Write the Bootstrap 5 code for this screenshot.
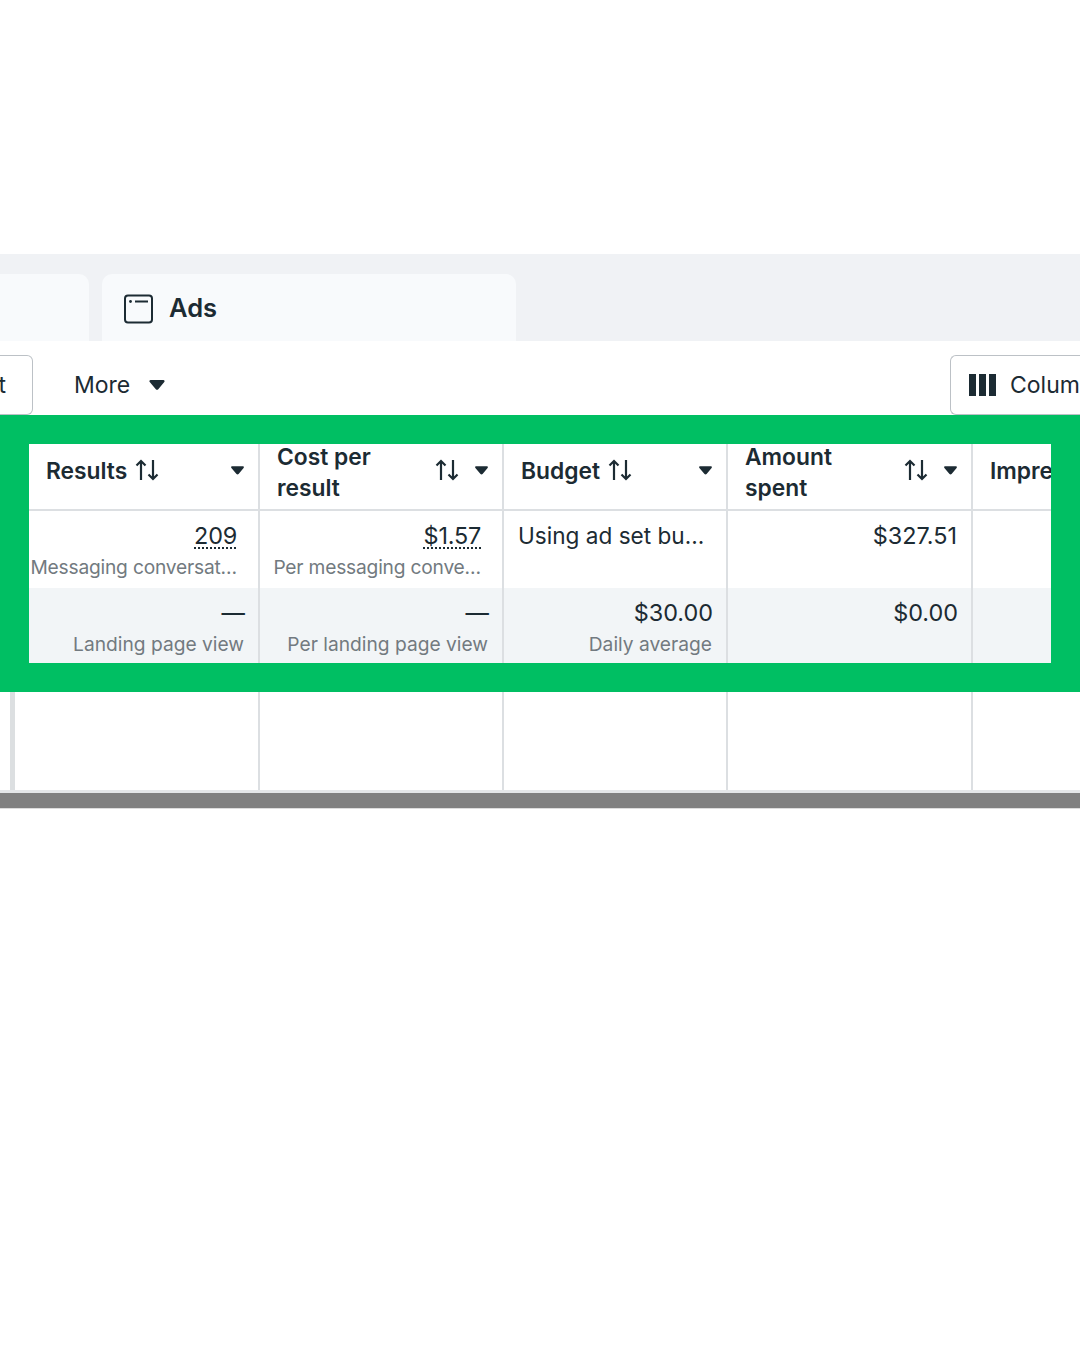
<!DOCTYPE html>
<html lang="en">
<head>
    <meta charset="UTF-8">
    <meta name="viewport" content="width=device-width, initial-scale=1.0">
    <title>Ads table</title>
    <link href="https://cdn.jsdelivr.net/npm/bootstrap@5.3.0/dist/css/bootstrap.min.css" rel="stylesheet">
    <style>
        body {
            font-family: Inter, "Noto Sans", sans-serif;
            color: #1c2b33;
            background: #fff;
            overflow: hidden;
        }
        .top-gap { height: 254px; }
        .tab-strip {
            height: 87px;
            background: #f0f2f5;
            padding-top: 20px;
            gap: 13px;
        }
        .tab-item {
            background: #f8fafc;
            border-radius: 10px 10px 0 0;
        }
        .tab-first { width: 89px; border-top-left-radius: 0; }
        .tab-ads {
            width: 414px;
            padding: 2px 0 0 21px;
            gap: 15px;
            font-size: 25.500px;
            font-weight: 600;
        }
        .tool-row { height: 74px; padding-top: 14px; }
        .tool-btn {
            height: 60px;
            background: #fff;
            border: 1.5px solid #bcc1c6;
            font-size: 23px;
        }
        .tool-left { width: 33px; border-left: 0; border-radius: 0 6px 6px 0; padding-right: 26px; justify-content: flex-end; overflow: hidden; }
        .tool-more { margin-left: 41px; gap: 19px; font-size: 23px; height: 60px; }
        .tool-cols {
            width: 130px;
            border-right: 0;
            border-radius: 6px 0 0 6px;
            padding-left: 18px;
            gap: 14px;
            overflow: hidden;
            white-space: nowrap;
        }
        .green-frame {
            background: #00bf63;
            padding: 29px;
        }
        .ads-grid {
            table-layout: fixed;
            width: 1022px;
            border-collapse: collapse;
            background: #fff;
        }
        .col-results { width: 230px; }
        .col-cost { width: 244px; }
        .col-budget { width: 224px; }
        .col-spent { width: 245px; }
        .col-impr { width: 79px; }
        .ads-grid th, .ads-grid td {
            border-right: 2px solid #dcdfe2;
            overflow: hidden;
            vertical-align: top;
            white-space: nowrap;
        }
        .ads-grid th:last-child, .ads-grid td:last-child { border-right: 0; }
        .ads-grid th {
            height: 66px;
            border-bottom: 2px solid #dcdfe2;
            font-size: 22.800px;
            font-weight: 600;
            line-height: 31px;
            padding: 0 14px 0 17px;
        }
        .head-inner { height: 52px; }
        .head-wrap { white-space: normal; margin-top: 4px; }
        .caret-gap { margin-left: 15px; }
        .body-a td { height: 78px; padding: 8px 14px 0 0; text-align: right; }
        .body-b td { height: 75px; padding: 8px 13px 0 0; text-align: right; background: #f2f5f7; }
        .big-val { font-size: 23.400px; line-height: 34px; }
        .dot-val {
            margin-right: 7px;
            text-decoration: underline dotted 2px;
            text-underline-offset: 3px;
            letter-spacing: -.2px;
        }
        .sub-val {
            font-size: 19.200px;
            line-height: 28px;
            color: #727a80;
            margin-right: 1px;
        }
        .sub-val.cut-val { margin-right: 7px; letter-spacing: -.2px; }
        .body-a td.left-val { text-align: left; padding-left: 14px; }
        .left-val .big-val { font-size: 22.600px; }
        .empty-row { height: 98px; }
        .empty-cell { border-right: 2px solid #dcdfe2; }
        .scroll-edge { width: 5px; margin-left: 10px; background: #dcdfe1; }
        .gap-a { width: 245px; }
        .gap-b { width: 244px; }
        .gap-c { width: 224px; }
        .gap-d { width: 245px; }
        .scroll-bar {
            height: 19px;
            background: #808080;
            border-top: 3px solid #e4e6e8;
            border-bottom: 1px solid #dcdcdc;
        }
    </style>
</head>
<body>
    <div class="top-gap"></div>

    <div class="tab-strip d-flex">
        <div class="tab-item tab-first"></div>
        <div class="tab-item tab-ads d-flex align-items-center">
            <svg width="31" height="30" viewBox="0 0 31 30" fill="none" stroke="#1c2b33" stroke-width="2">
                <rect x="2" y="1.500" width="27" height="27" rx="3"/>
                <circle cx="7.500" cy="7.500" r="1.400" fill="#1c2b33" stroke="none"/>
                <path d="M12 7.500h13"/>
            </svg>
            <span>Ads</span>
        </div>
    </div>

    <div class="tool-row d-flex align-items-start">
        <div class="tool-btn tool-left d-flex align-items-center"><span>t</span></div>
        <div class="tool-more d-flex align-items-center">
            <span>More</span>
            <svg width="16" height="10" viewBox="0 0 17 11" fill="#1c2b33"><path d="M1.500 0h14c1.200 0 1.800 1.400 1 2.300l-6.600 7.900c-.7.800-2 .8-2.700 0L.5 2.300C-.3 1.400.3 0 1.500 0z"/></svg>
        </div>
        <div class="tool-btn tool-cols d-flex align-items-center ms-auto">
            <svg class="flex-shrink-0" width="27" height="22" viewBox="0 0 27 22" fill="#1c2b33"><path d="M0 0h7v22H0zM10 0h7v22h-7zM20 0h7v22h-7z"/></svg>
            <span>Columns</span>
        </div>
    </div>

    <div class="green-frame">
        <table class="ads-grid">
            <colgroup>
                <col class="col-results">
                <col class="col-cost">
                <col class="col-budget">
                <col class="col-spent">
                <col class="col-impr">
            </colgroup>
            <thead>
                <tr>
                    <th>
                        <div class="head-inner d-flex align-items-center">
                            <span>Results</span>
                            <svg class="ms-2" width="25" height="22" viewBox="0 0 25 22" fill="none" stroke="#1c2b33" stroke-width="2.200"><path d="M6 21V2M1.500 6.500 6 2l4.500 4.500M18 1v19M13.500 15.500 18 20l4.500-4.500"/></svg>
                            <svg class="ms-auto" width="13" height="9" viewBox="0 0 17 11" fill="#1c2b33"><path d="M1.500 0h14c1.200 0 1.800 1.400 1 2.300l-6.600 7.900c-.7.800-2 .8-2.700 0L.5 2.300C-.3 1.400.3 0 1.500 0z"/></svg>
                        </div>
                    </th>
                    <th>
                        <div class="head-inner d-flex align-items-center">
                            <span class="head-wrap">Cost per<br>result</span>
                            <svg class="ms-auto" width="25" height="22" viewBox="0 0 25 22" fill="none" stroke="#1c2b33" stroke-width="2.200"><path d="M6 21V2M1.500 6.500 6 2l4.500 4.500M18 1v19M13.500 15.500 18 20l4.500-4.500"/></svg>
                            <svg class="caret-gap" width="13" height="9" viewBox="0 0 17 11" fill="#1c2b33"><path d="M1.500 0h14c1.200 0 1.800 1.400 1 2.300l-6.600 7.900c-.7.800-2 .8-2.700 0L.5 2.300C-.3 1.400.3 0 1.500 0z"/></svg>
                        </div>
                    </th>
                    <th>
                        <div class="head-inner d-flex align-items-center">
                            <span>Budget</span>
                            <svg class="ms-2" width="25" height="22" viewBox="0 0 25 22" fill="none" stroke="#1c2b33" stroke-width="2.200"><path d="M6 21V2M1.500 6.500 6 2l4.500 4.500M18 1v19M13.500 15.500 18 20l4.500-4.500"/></svg>
                            <svg class="ms-auto" width="13" height="9" viewBox="0 0 17 11" fill="#1c2b33"><path d="M1.500 0h14c1.200 0 1.800 1.400 1 2.300l-6.600 7.900c-.7.800-2 .8-2.700 0L.5 2.300C-.3 1.400.3 0 1.500 0z"/></svg>
                        </div>
                    </th>
                    <th>
                        <div class="head-inner d-flex align-items-center">
                            <span class="head-wrap">Amount<br>spent</span>
                            <svg class="ms-auto" width="25" height="22" viewBox="0 0 25 22" fill="none" stroke="#1c2b33" stroke-width="2.200"><path d="M6 21V2M1.500 6.500 6 2l4.500 4.500M18 1v19M13.500 15.500 18 20l4.500-4.500"/></svg>
                            <svg class="caret-gap" width="13" height="9" viewBox="0 0 17 11" fill="#1c2b33"><path d="M1.500 0h14c1.200 0 1.800 1.400 1 2.300l-6.600 7.900c-.7.800-2 .8-2.700 0L.5 2.300C-.3 1.400.3 0 1.500 0z"/></svg>
                        </div>
                    </th>
                    <th><div class="head-inner d-flex align-items-center">Impressions</div></th>
                </tr>
            </thead>
            <tbody>
                <tr class="body-a">
                    <td>
                        <div class="big-val"><span class="dot-val">209</span></div>
                        <div class="sub-val cut-val">Messaging conversat…</div>
                    </td>
                    <td>
                        <div class="big-val"><span class="dot-val">$1.57</span></div>
                        <div class="sub-val cut-val">Per messaging conve…</div>
                    </td>
                    <td class="left-val"><div class="big-val">Using ad set bu…</div></td>
                    <td><div class="big-val">$327.51</div></td>
                    <td></td>
                </tr>
                <tr class="body-b">
                    <td>
                        <div class="big-val">—</div>
                        <div class="sub-val">Landing page view</div>
                    </td>
                    <td>
                        <div class="big-val">—</div>
                        <div class="sub-val">Per landing page view</div>
                    </td>
                    <td>
                        <div class="big-val">$30.00</div>
                        <div class="sub-val">Daily average</div>
                    </td>
                    <td><div class="big-val">$0.00</div></td>
                    <td></td>
                </tr>
            </tbody>
        </table>
    </div>

    <div class="empty-row d-flex">
        <div class="scroll-edge"></div>
        <div class="empty-cell gap-a"></div>
        <div class="empty-cell gap-b"></div>
        <div class="empty-cell gap-c"></div>
        <div class="empty-cell gap-d"></div>
    </div>
    <div class="scroll-bar"></div>

    <script src="https://cdn.jsdelivr.net/npm/bootstrap@5.3.0/dist/js/bootstrap.bundle.min.js"></script>
</body>
</html>
